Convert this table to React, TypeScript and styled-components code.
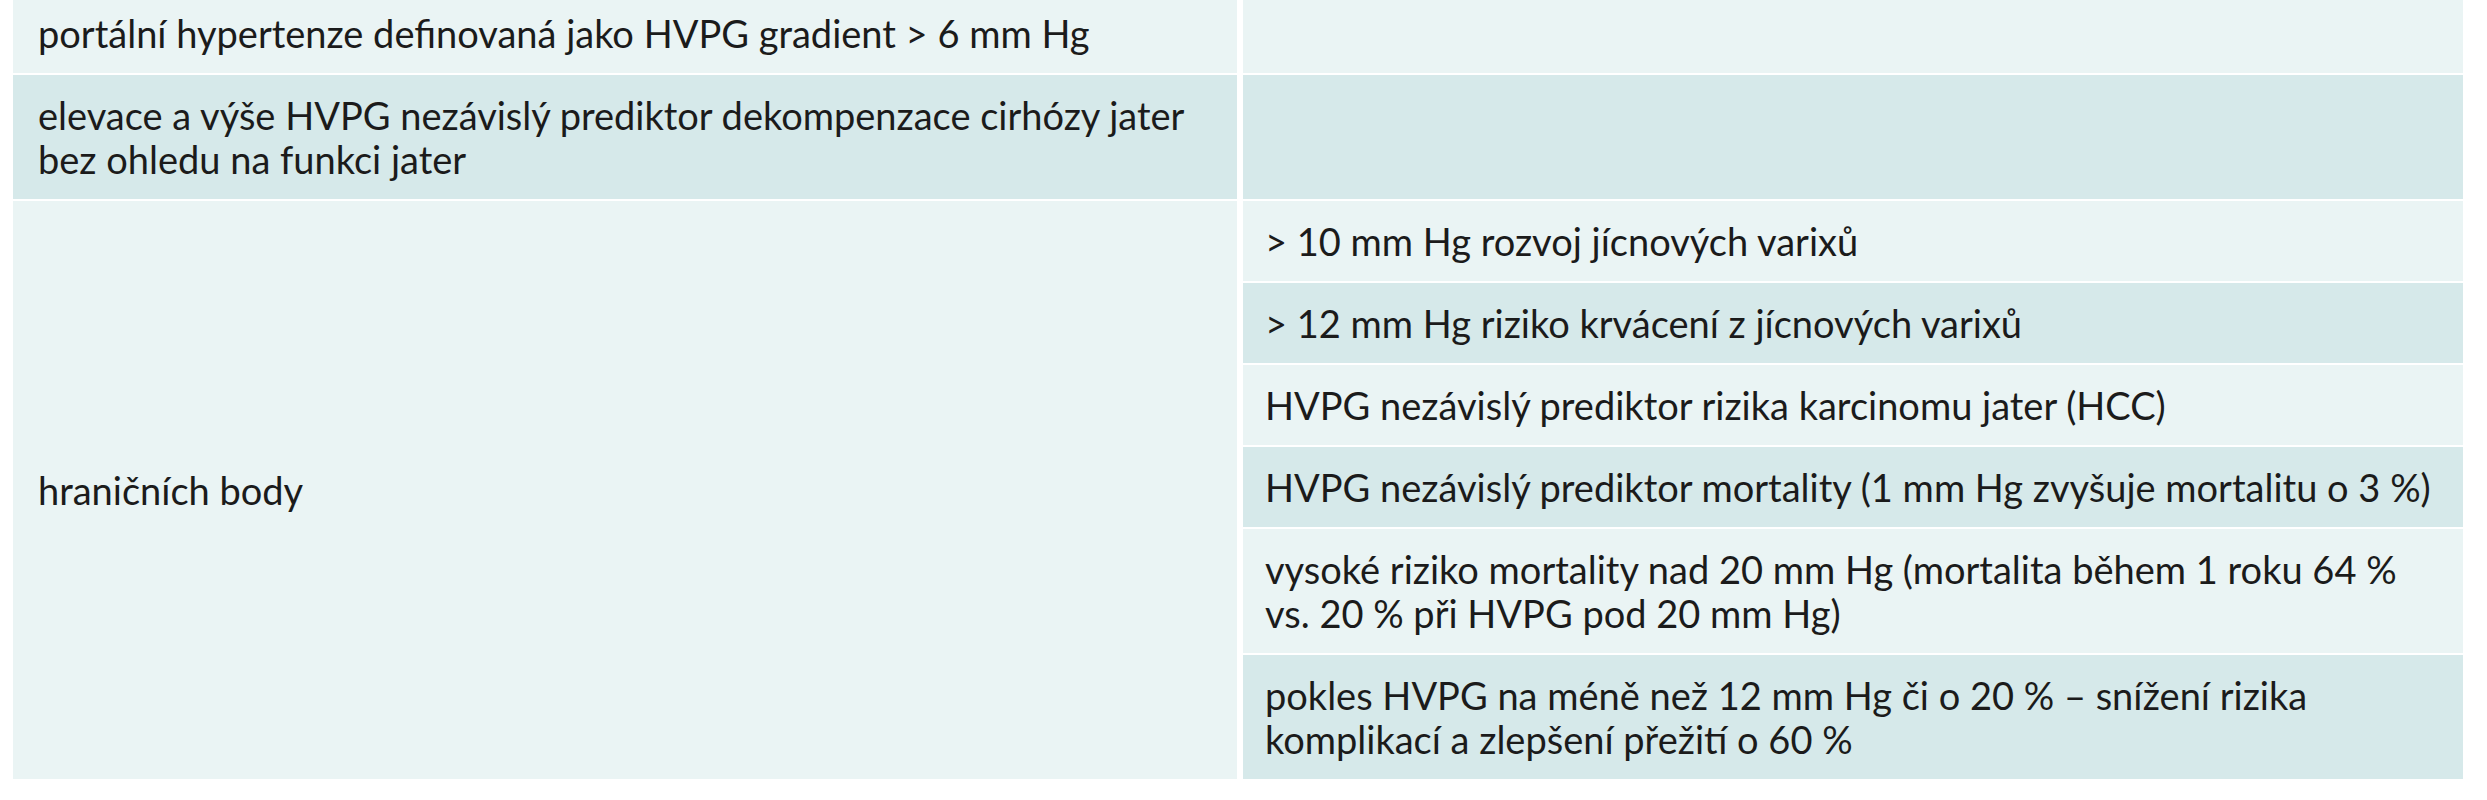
import React from "react";
import styled, {createGlobalStyle} from "styled-components";

const GlobalStyle = createGlobalStyle`
	html, body {
		margin: 0;
		padding: 0;
		background: #ffffff;
	}
	body {
		font-family: Lato, "Open Sans", sans-serif;
	}
`;

const Table = styled.div`
	display: grid;
	grid-template-columns: 1224px 1220px;
	column-gap: 6px;
	row-gap: 2px;
	margin-left: 13px;
	margin-top: -7px;
	width: 2450px;
`;

interface CellProps {
	$dark?: boolean;
	$span?: number;
}

const Cell = styled.div<CellProps>`
	background: ${({$dark}) => ($dark ? "#d6e9ea" : "#eaf4f4")};
	color: #1b1b1b;
	font-size: 38px;
	line-height: 44px;
	padding: 18px 22px 18px 25px;
	white-space: nowrap;
	display: flex;
	align-items: center;
	${({$span}) => ($span ? `grid-row: span ${$span};` : "")}
`;

const SubCell = styled(Cell)`
	padding-left: 22px;
`;

const subRows: {lines: string[]; dark: boolean}[] = [
	{lines: ["> 10 mm Hg rozvoj jícnových varixů"], dark: false},
	{lines: ["> 12 mm Hg riziko krvácení z jícnových varixů"], dark: true},
	{lines: ["HVPG nezávislý prediktor rizika karcinomu jater (HCC)"], dark: false},
	{lines: ["HVPG nezávislý prediktor mortality (1 mm Hg zvyšuje mortalitu o 3 %)"], dark: true},
	{
		lines: [
			"vysoké riziko mortality nad 20 mm Hg (mortalita během 1 roku 64 %",
			"vs. 20 % při HVPG pod 20 mm Hg)"
		],
		dark: false
	},
	{
		lines: [
			"pokles HVPG na méně než 12 mm Hg či o 20 % – snížení rizika",
			"komplikací a zlepšení přežití o 60 %"
		],
		dark: true
	}
];

const Lines = ({lines}: {lines: string[]}) => (
	<span>
		{lines.map((l, i) => (
			<React.Fragment key={i}>
				{i > 0 && <br />}
				{l}
			</React.Fragment>
		))}
	</span>
);

export default function App() {
	return (
		<>
			<GlobalStyle />
			<Table>
				<Cell>portální hypertenze definovaná jako HVPG gradient &gt; 6 mm Hg</Cell>
				<Cell />
				<Cell $dark>
					<Lines
						lines={[
							"elevace a výše HVPG nezávislý prediktor dekompenzace cirhózy jater",
							"bez ohledu na funkci jater"
						]}
					/>
				</Cell>
				<Cell $dark />
				<Cell $span={6}>hraničních body</Cell>
				{subRows.map((r, i) => (
					<SubCell key={i} $dark={r.dark}>
						<Lines lines={r.lines} />
					</SubCell>
				))}
			</Table>
		</>
	);
}
